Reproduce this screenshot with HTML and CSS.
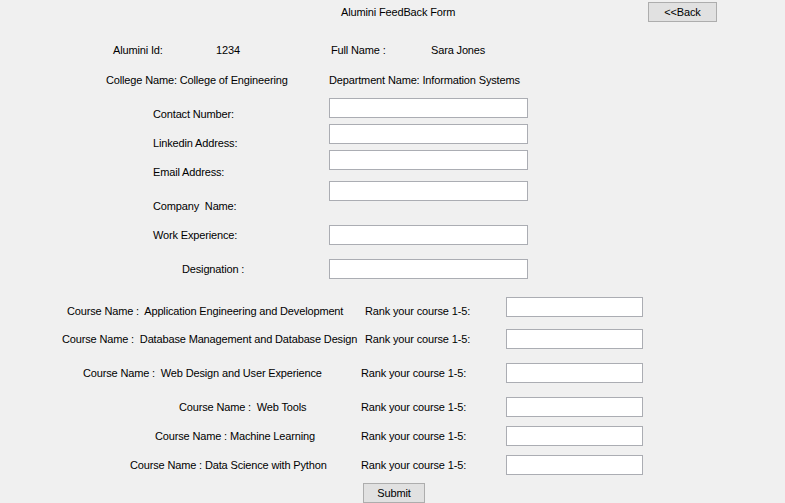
FILE: index.html
```html
<!DOCTYPE html>
<html lang="en">
<head>
<meta charset="utf-8">
<title>Alumini FeedBack Form</title>
<link rel="stylesheet" href="styles.css">
</head>
<body>
<div class="form">
  <div class="header">
    <span class="title">Alumini FeedBack Form</span>
    <button class="btn btn-back" type="button">&lt;&lt;Back</button>
  </div>

  <div class="info info-id">
    <span>Alumini Id:</span>
    <span>1234</span>
    <span>Full Name :</span>
    <span>Sara Jones</span>
  </div>

  <div class="info info-college">
    <span>College Name: College of Engineering</span>
    <span>Department Name: Information Systems</span>
  </div>

  <div class="contact">
    <div class="contact-labels">
      <label class="cl cl-1">Contact Number:</label>
      <label class="cl cl-2">Linkedin Address:</label>
      <label class="cl cl-3">Email Address:</label>
      <label class="cl cl-4">Company  Name:</label>
      <label class="cl cl-5">Work Experience:</label>
      <label class="cl cl-6">Designation :</label>
    </div>
    <div class="contact-fields">
      <input class="field field-1" type="text">
      <input class="field field-2" type="text">
      <input class="field field-3" type="text">
      <input class="field field-4" type="text">
      <input class="field field-5" type="text">
      <input class="field field-6" type="text">
    </div>
  </div>

  <div class="courses">
    <div class="course course-1">
      <span class="cname">Course Name :  Application Engineering and Development</span>
      <span class="rank">Rank your course 1-5:</span>
      <input class="rfield" type="text">
    </div>
    <div class="course course-2">
      <span class="cname">Course Name :  Database Management and Database Design</span>
      <span class="rank">Rank your course 1-5:</span>
      <input class="rfield" type="text">
    </div>
    <div class="course course-3">
      <span class="cname">Course Name :  Web Design and User Experience</span>
      <span class="rank">Rank your course 1-5:</span>
      <input class="rfield" type="text">
    </div>
    <div class="course course-4">
      <span class="cname">Course Name :  Web Tools</span>
      <span class="rank">Rank your course 1-5:</span>
      <input class="rfield" type="text">
    </div>
    <div class="course course-5">
      <span class="cname">Course Name : Machine Learning</span>
      <span class="rank">Rank your course 1-5:</span>
      <input class="rfield" type="text">
    </div>
    <div class="course course-6">
      <span class="cname">Course Name : Data Science with Python</span>
      <span class="rank">Rank your course 1-5:</span>
      <input class="rfield" type="text">
    </div>
  </div>

  <button class="btn btn-submit" type="button">Submit</button>
</div>
</body>
</html>
```

FILE: styles.css
```css
html, body {
  margin: 0;
  padding: 0;
  height: 100%;
}

body {
  background: #f0f0f0;
  font-family: "Liberation Sans", Arial, sans-serif;
  font-size: 11px;
  letter-spacing: -0.15px;
  color: #000;
  overflow: hidden;
}

.form {
  display: flex;
  flex-direction: column;
  align-items: flex-start;
  width: 785px;
}

/* header */
.header {
  display: flex;
  align-items: center;
  height: 24px;
}

.title {
  margin-left: 341px;
  width: 109px;
  text-align: center;
  white-space: nowrap;
}

.btn {
  box-sizing: border-box;
  height: 20px;
  margin: 0;
  padding: 0;
  border: 1px solid #adadad;
  border-radius: 0;
  background: #e1e1e1;
  font: inherit;
  letter-spacing: inherit;
  color: inherit;
  display: flex;
  align-items: center;
  justify-content: center;
}

.btn-back {
  margin-left: 198px;
  width: 69px;
}

.btn-submit {
  margin-top: 8px;
  margin-left: 363px;
  width: 62px;
}

/* info rows */
.info {
  display: grid;
  height: 24px;
  align-items: center;
  white-space: pre;
}

.info-id {
  margin-top: 14px;
  padding-left: 113px;
  grid-template-columns: 103px 115px 100px auto;
}

.info-college {
  margin-top: 6px;
  padding-left: 106px;
  grid-template-columns: 223px auto;
}

/* contact section */
.contact {
  display: flex;
}

.contact-labels {
  display: flex;
  flex-direction: column;
  box-sizing: border-box;
  width: 329px;
  padding-left: 153px;
}

.cl {
  display: block;
  height: 20px;
  line-height: 20px;
  white-space: pre;
}

.cl-1 { margin-top: 12px; }
.cl-2 { margin-top: 9px; }
.cl-3 { margin-top: 9px; }
.cl-4 { margin-top: 14px; }
.cl-5 { margin-top: 9px; }
.cl-6 { margin-top: 14px; margin-left: 29px; }

.contact-fields {
  display: flex;
  flex-direction: column;
}

.field,
.rfield {
  box-sizing: border-box;
  height: 20px;
  margin: 0;
  padding: 0 3px;
  border: 1px solid #abadb3;
  border-radius: 0;
  background: #fff;
  font: inherit;
  outline: none;
}

.field { width: 199px; }

.field-1 { margin-top: 6px; }
.field-2 { margin-top: 6px; }
.field-3 { margin-top: 6px; }
.field-4 { margin-top: 11px; }
.field-5 { margin-top: 24px; }
.field-6 { margin-top: 14px; }

/* courses */
.courses {
  display: flex;
  flex-direction: column;
  margin-top: 18px;
}

.course {
  display: grid;
  grid-template-columns: 361px 145px 137px;
  height: 20px;
  align-items: center;
  white-space: pre;
}

.rfield { width: 137px; }

.course-1 .cname { padding-left: 67px; }
.course-2 .cname { padding-left: 62px; }
.course-3 .cname { padding-left: 83px; }
.course-4 .cname { padding-left: 179px; }
.course-5 .cname { padding-left: 155px; }
.course-6 .cname { padding-left: 130px; }

.course-1 .rank,
.course-2 .rank { padding-left: 4px; }

.course-1 .cname,
.course-1 .rank { margin-top: 8px; }

.course-2 { margin-top: 12px; }
.course-3 { margin-top: 14px; }
.course-4 { margin-top: 14px; }
.course-5 { margin-top: 9px; }
.course-6 { margin-top: 9px; }
```
